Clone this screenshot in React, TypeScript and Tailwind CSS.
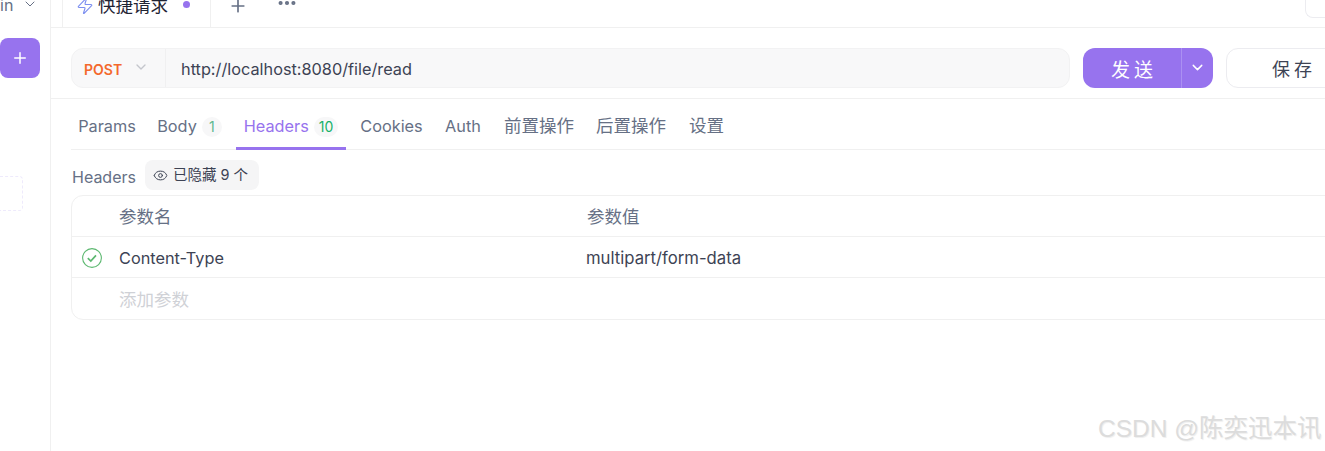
import { ChevronDown, Eye, Plus, Ellipsis, Zap } from 'lucide-react'

const font = { sans: "font-['Inter','Noto_Sans_CJK_SC',sans-serif]" }

const tabs = [
  { label: 'Params', width: 'w-[72px]' },
  { label: 'Body', count: '1', width: 'w-[93px]' },
  { label: 'Headers', count: '10', width: 'w-[110px]', active: true },
  { label: 'Cookies', width: 'w-[91px]' },
  { label: 'Auth', width: 'w-[52px]' },
  { label: '前置操作', width: 'w-[100px]', cjk: true },
  { label: '后置操作', width: 'w-[84px]', cjk: true },
  { label: '设置', width: 'w-[67px]', cjk: true },
]

function Sidebar() {
  return (
    <aside className="w-[51px] shrink-0 border-r border-[#f0f0f0] flex flex-col overflow-hidden">
      <div className="h-[10px] flex items-center gap-[9px] text-[16px] text-[#667085]">
        <span className="leading-none -mt-[1px]">in</span>
        <ChevronDown className="w-4 h-4 -mt-[2px]" strokeWidth={1.5} />
      </div>
      <button className="mt-[28px] w-10 h-10 rounded-lg bg-[#9773ee] flex items-center justify-center text-white">
        <Plus className="w-[18px] h-[18px]" strokeWidth={2} />
      </button>
      <div className="mt-[98px] w-[23px] h-[35px] rounded-r border border-l-0 border-dashed border-[#eeeafc]" />
    </aside>
  )
}

function TopTabs() {
  return (
    <div className="h-[28px] border-b border-[#f0f0f0] flex items-start pl-[11px] overflow-hidden">
      <div className="w-[149px] h-[28px] border-x border-[#f0f0f0] flex items-start pl-[13px]">
        <Zap className="w-[18px] h-[18px] -mt-[3px] text-[#7c8ff0]" strokeWidth={1.5} />
        <span className="ml-[4px] text-[17.5px] leading-[20px] -mt-[4px] text-[#1f2433]">快捷请求</span>
        <span className="ml-[15px] mt-[1px] w-[7px] h-[7px] rounded-full bg-[#9773ee]" />
      </div>
      <Plus className="ml-[17px] -mt-[4px] w-[20px] h-[20px] text-[#667085]" strokeWidth={2} />
      <Ellipsis className="ml-[28px] -mt-[8px] w-[22px] h-[22px] text-[#667085]" strokeWidth={2.5} />
      <div className="ml-auto w-5 h-[18px] rounded-bl-lg border-l border-b border-[#ececf0]" />
    </div>
  )
}

function RequestBar() {
  return (
    <div className="h-[71px] border-b border-[#f0f0f0] flex items-start pt-[20px] pl-5 gap-[13px] overflow-hidden">
      <div className="w-[999px] h-10 rounded-xl bg-[#f8f8f9] border border-[#f2f2f3] flex items-center shrink-0">
        <div className="w-[94px] h-full border-r border-[#f0f0f1] flex items-center pl-[12px] gap-[11px]">
          <span className="text-[14px] mt-[3px] font-semibold text-[#f4682c]">POST</span>
          <ChevronDown className="w-[16px] h-[16px] -mt-[3px] text-[#c4c6cc]" strokeWidth={2} />
        </div>
        <span className="ml-[15px] mt-[2px] text-[16.3px] text-[#3d4354]">http://localhost:8080/file/read</span>
      </div>
      <div className="w-[130px] h-10 rounded-xl bg-[#9773ee] flex shrink-0 text-white">
        <div className="w-[99px] pl-[4px] pt-[6px] flex items-center justify-center text-[19px] tracking-[4px] border-r border-[#ab90f2]">发送</div>
        <div className="flex-1 flex items-center justify-center">
          <ChevronDown className="w-[17px] h-[17px] -mt-[2px]" strokeWidth={2} />
        </div>
      </div>
      <div className="w-[130px] h-10 rounded-xl border border-[#ececf0] pl-[6px] pt-[2px] flex items-center justify-center text-[18px] tracking-[4px] text-[#3d4354] shrink-0">保存</div>
    </div>
  )
}

function TabBar() {
  return (
    <div className="ml-5 h-[51px] border-b border-[#f0f0f0] flex">
      {tabs.map((t) => (
        <div
          key={t.label}
          className={`${t.width} shrink-0 pt-[7px] flex items-center justify-center gap-[5px] -mb-px border-b-[3px] ${
            t.cjk ? 'text-[17.5px]' : 'text-[16.3px]'
          } ${t.active ? 'border-[#9773ee] text-[#9773ee]' : 'border-transparent text-[#667085]'}`}
        >
          <span>{t.label}</span>
          {t.count && (
            <span className={`h-5 min-w-5 px-[5px] rounded-full bg-[#f7f7f8] text-[14px] leading-5 text-center ${t.active ? 'text-[#17b26a]' : 'text-[#5fb98f]'}`}>
              {t.count}
            </span>
          )}
        </div>
      ))}
    </div>
  )
}

function HeadersTable() {
  return (
    <div className="ml-5 mt-[45px] -mr-4 h-[125px] rounded-xl border border-[#f0f0f0] text-[16.3px]">
      <div className="h-[41px] pt-[3px] border-b border-[#f0f0f0] flex items-center text-[17.5px] text-[#667085]">
        <span className="ml-[47px] w-[468px]">参数名</span>
        <span>参数值</span>
      </div>
      <div className="h-[41px] pt-[3px] border-b border-[#f0f0f0] flex items-center text-[#3d4354]">
        <svg className="ml-[10px] -mt-[2px] w-[20px] h-[20px]" viewBox="0 0 20 20" fill="none" stroke="#5cb870">
          <circle cx="10" cy="10" r="9.4" strokeWidth="1.1" />
          <path d="M5.8 10.2 8.8 13 14 7.4" strokeWidth="1.7" />
        </svg>
        <span className="ml-[17px] w-[467px]">Content-Type</span>
        <span className="text-[16.7px]">multipart/form-data</span>
      </div>
      <div className="h-[41px] pt-[3px] flex items-center text-[17.5px] text-[#cfd1d6]">
        <span className="ml-[47px]">添加参数</span>
      </div>
    </div>
  )
}

export default function App() {
  return (
    <div className={`relative w-[1325px] h-[451px] overflow-hidden bg-white flex ${font.sans}`}>
      <Sidebar />
      <main className="relative flex-1 min-w-0 overflow-hidden">
        <TopTabs />
        <RequestBar />
        <TabBar />
        {/* Hidden headers row sits over the gap above the table */}
        <div className="absolute left-[21px] top-[160px] flex items-center">
          <span className="text-[16px] text-[#667085] mt-[4px]">Headers</span>
          <span className="ml-[9px] h-[30px] w-[114px] rounded-lg bg-[#f5f5f6] flex items-center pl-[8px] gap-[5px] text-[14.5px] text-[#3d4354]">
            <Eye className="w-[15px] h-[15px]" strokeWidth={1.6} />
            已隐藏 9 个
          </span>
        </div>
        <HeadersTable />
      </main>
      <div className="absolute left-[1098px] top-[413px] text-[24.5px] leading-[32px] text-[#dcdcdc] whitespace-nowrap font-['Liberation_Sans','Noto_Sans_CJK_SC',sans-serif] [text-shadow:1px_1px_1px_#eeeeee]">
        CSDN @陈奕迅本讯
      </div>
    </div>
  )
}
